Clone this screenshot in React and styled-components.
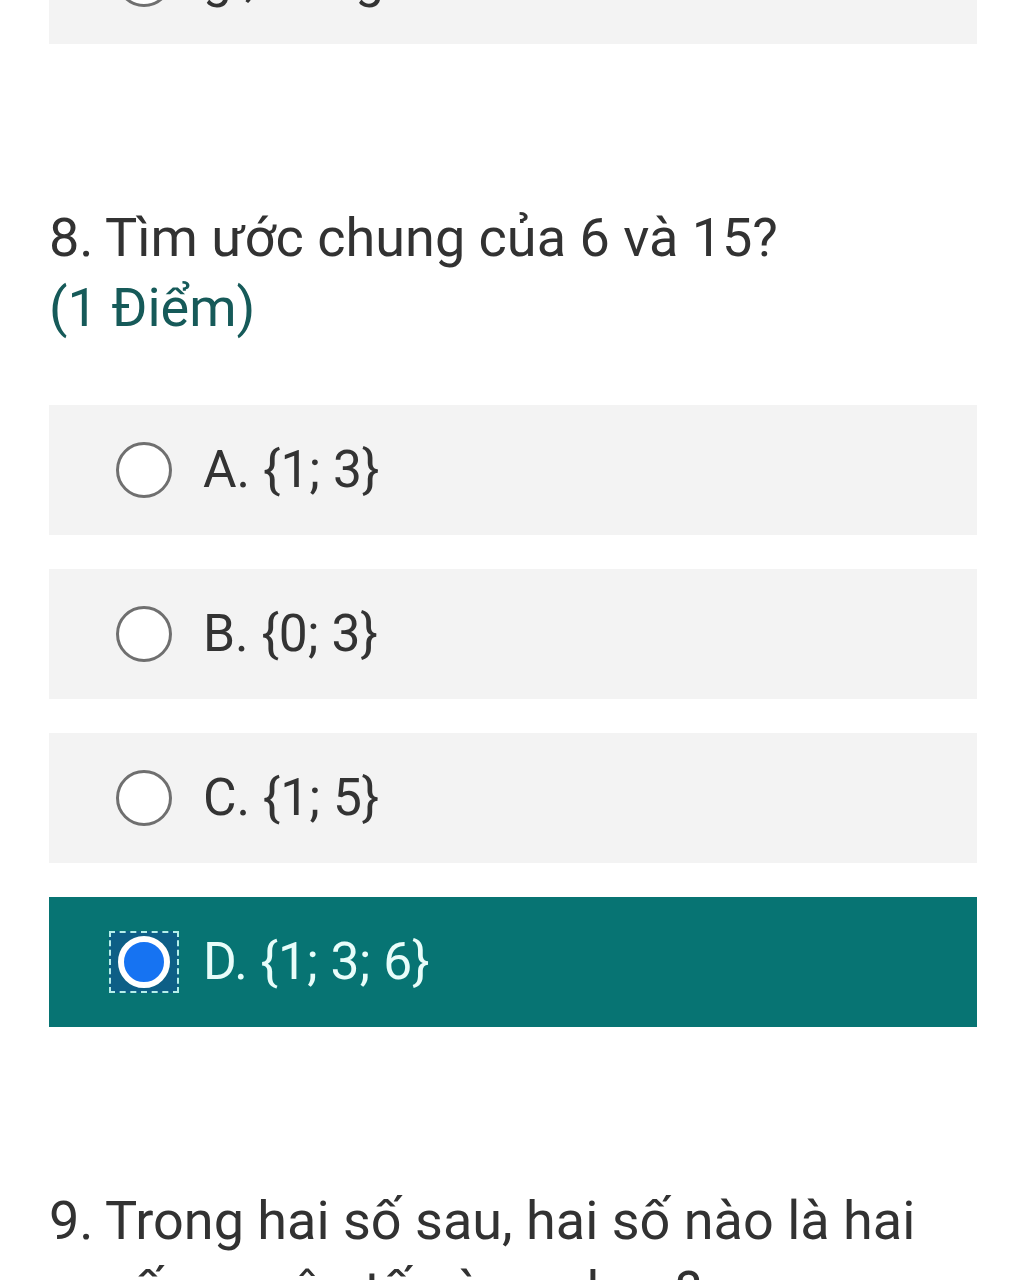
import React from "react";
import styled, { createGlobalStyle } from "styled-components";

const GlobalStyle = createGlobalStyle`
  html, body {
    margin: 0;
    padding: 0;
    background: #ffffff;
  }
  body {
    font-family: Roboto, "Noto Sans", "Liberation Sans", sans-serif;
    overflow: hidden;
  }
`;

const Page = styled.div`
  display: flex;
  flex-direction: column;
  padding: 0 47px 0 49px;
  height: 1280px;
  overflow: hidden;
`;

const PrevOptions = styled.div`
  display: flex;
  flex-direction: column;
  margin-top: -86px;
`;

const Question = styled.div`
  display: flex;
  flex-direction: column;
  margin-top: 159px;
`;

const Title = styled.div`
  display: flex;
  font-size: 54px;
  line-height: 70px;
  color: #323232;
`;

const Num = styled.span`
  flex: 0 0 auto;
  width: 56px;
  white-space: nowrap;
`;

const TitleText = styled.span`
  flex: 1;
`;

const Points = styled.div`
  font-size: 54px;
  line-height: 70px;
  color: #165a59;
`;

const Options = styled.div`
  display: flex;
  flex-direction: column;
  gap: 34px;
  margin-top: 62px;
`;

const Option = styled.div`
  display: flex;
  align-items: center;
  height: 130px;
  padding-left: 60px;
  background: ${(p) => (p.$selected ? "#077473" : "#f3f3f3")};
  color: ${(p) => (p.$selected ? "#e8fdfa" : "#333333")};
  font-size: 51.5px;
  white-space: nowrap;
`;

const RadioWrap = styled.div`
  box-sizing: border-box;
  width: 70px;
  height: 62px;
  display: flex;
  align-items: center;
  justify-content: center;
  margin-right: 24px;
  border: 2px dashed ${(p) => (p.$focus ? "#b5eeea" : "transparent")};
  background: ${(p) => (p.$focus ? "#0d5f86" : "transparent")};
`;

const Radio = styled.span`
  box-sizing: border-box;
  display: block;
  width: ${(p) => (p.$checked ? "52px" : "56px")};
  height: ${(p) => (p.$checked ? "52px" : "56px")};
  border-radius: 50%;
  border: ${(p) => (p.$checked ? "6px solid #ffffff" : "3px solid #6f6f6f")};
  background: ${(p) => (p.$checked ? "#1673f2" : "#ffffff")};
`;

const Label = styled.span`
  line-height: 1;
`;

const OptionRow = ({ label, selected }) => (
  <Option $selected={selected}>
    <RadioWrap $focus={selected}>
      <Radio $checked={selected} />
    </RadioWrap>
    <Label>{label}</Label>
  </Option>
);

export default function App() {
  const opts = ["A. {1; 3}", "B. {0; 3}", "C. {1; 5}", "D. {1; 3; 6}"];
  return (
    <>
      <GlobalStyle />
      <Page>
        <PrevOptions>
          <OptionRow label="gì, đúng" />
        </PrevOptions>

        <Question>
          <Title>
            <Num>8.</Num>
            <TitleText>Tìm ước chung của 6 và 15?</TitleText>
          </Title>
          <Points>(1 Điểm)</Points>
          <Options>
            {opts.map((o, i) => (
              <OptionRow key={o} label={o} selected={i === 3} />
            ))}
          </Options>
        </Question>

        <Question>
          <Title>
            <Num>9.</Num>
            <TitleText>Trong hai số sau, hai số nào là hai số nguyên tố cùng nhau?</TitleText>
          </Title>
        </Question>
      </Page>
    </>
  );
}
